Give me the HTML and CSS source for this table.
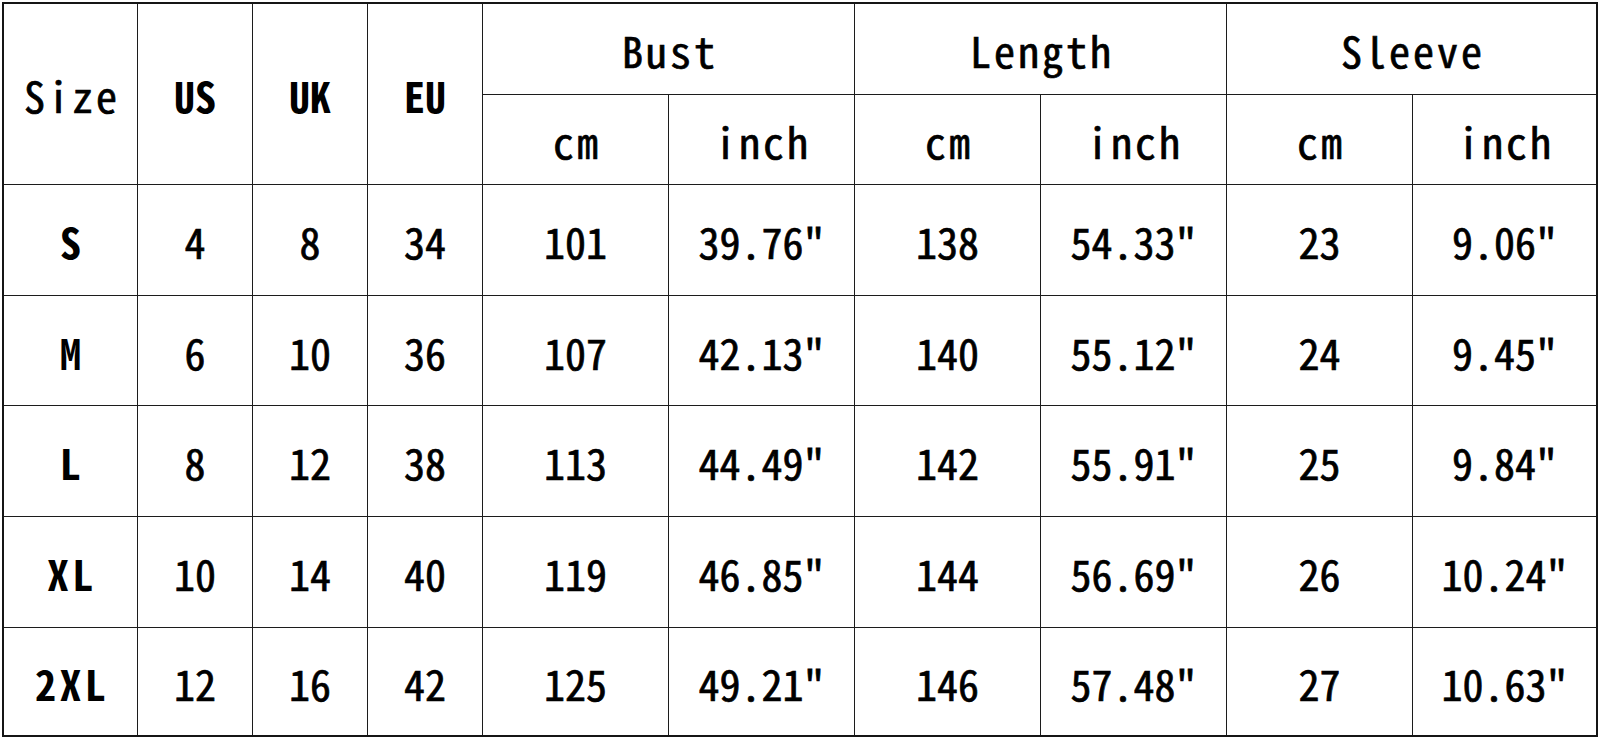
FILE: index.html
```html
<!DOCTYPE html>
<html lang="en">
<head>
<meta charset="utf-8">
<title>Size Chart</title>
<link rel="stylesheet" href="styles.css">
</head>
<body>
<div class="frame">
  <div class="chart">
    <div class="cell head span-rows spaced">Size</div>
    <div class="cell head span-rows">US</div>
    <div class="cell head span-rows">UK</div>
    <div class="cell head span-rows">EU</div>
    <div class="cell head span-cols spaced group">Bust</div>
    <div class="cell head span-cols spaced group">Length</div>
    <div class="cell head span-cols spaced group">Sleeve</div>
    <div class="cell head spaced unit">cm</div>
    <div class="cell head spaced unit">inch</div>
    <div class="cell head spaced unit">cm</div>
    <div class="cell head spaced unit">inch</div>
    <div class="cell head spaced unit">cm</div>
    <div class="cell head spaced unit">inch</div>

    <div class="cell size">S</div><div class="cell">4</div><div class="cell">8</div><div class="cell">34</div>
    <div class="cell">101</div><div class="cell">39.76"</div><div class="cell">138</div><div class="cell">54.33"</div><div class="cell">23</div><div class="cell">9.06"</div>

    <div class="cell size">M</div><div class="cell">6</div><div class="cell">10</div><div class="cell">36</div>
    <div class="cell">107</div><div class="cell">42.13"</div><div class="cell">140</div><div class="cell">55.12"</div><div class="cell">24</div><div class="cell">9.45"</div>

    <div class="cell size">L</div><div class="cell">8</div><div class="cell">12</div><div class="cell">38</div>
    <div class="cell">113</div><div class="cell">44.49"</div><div class="cell">142</div><div class="cell">55.91"</div><div class="cell">25</div><div class="cell">9.84"</div>

    <div class="cell size">XL</div><div class="cell">10</div><div class="cell">14</div><div class="cell">40</div>
    <div class="cell">119</div><div class="cell">46.85"</div><div class="cell">144</div><div class="cell">56.69"</div><div class="cell">26</div><div class="cell">10.24"</div>

    <div class="cell size">2XL</div><div class="cell">12</div><div class="cell">16</div><div class="cell">42</div>
    <div class="cell">125</div><div class="cell">49.21"</div><div class="cell">146</div><div class="cell">57.48"</div><div class="cell">27</div><div class="cell">10.63"</div>
  </div>
</div>
</body>
</html>
```

FILE: styles.css
```css
html, body {
  margin: 0;
  padding: 0;
  background: #ffffff;
}

body {
  font-family: "Noto Sans Mono CJK SC", "Liberation Mono", "DejaVu Sans Mono", monospace;
  color: #000000;
}

.frame {
  width: 1592px;
  height: 731px;
  margin: 2px 0 0 2px;
  border: 2px solid #151515;
  background: #1c1c1c;
}

.chart {
  display: grid;
  grid-template-columns: 133px 114px 114px 114px 185px 185px 185px 185px 185px 183px;
  grid-template-rows: 90px 89px 110px 109px 110px 110px 107px;
  gap: 1px;
  width: 100%;
  height: 100%;
}

.cell {
  background: #ffffff;
  display: flex;
  align-items: center;
  justify-content: center;
  font-size: 42px;
  font-weight: 400;
  -webkit-text-stroke: 0.7px #000000;
  line-height: 1;
  padding-top: 2px;
  box-sizing: border-box;
  white-space: nowrap;
}

.head {
  font-weight: 700;
  -webkit-text-stroke: 0;
}

.span-rows {
  grid-row: span 2;
}

.span-cols {
  grid-column: span 2;
}

.spaced {
  letter-spacing: 3px;
  padding-left: 3px;
  font-weight: 400;
  -webkit-text-stroke: 0.7px #000000;
}

.size {
  font-weight: 700;
  -webkit-text-stroke: 0;
  letter-spacing: 4px;
  padding-left: 4px;
}
```
